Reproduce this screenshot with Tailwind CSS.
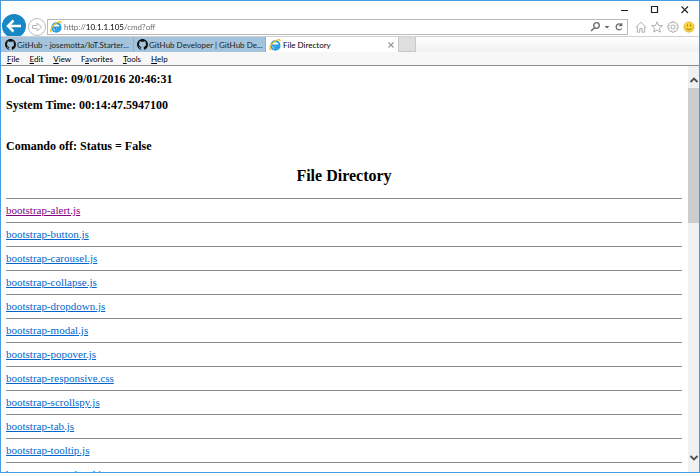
<!DOCTYPE html>
<html lang="en">
<head>
  <meta charset="UTF-8">
  <meta name="viewport" content="width=device-width, initial-scale=1.0">
  <title>File Directory</title>
  <script src="https://cdn.jsdelivr.net/npm/@tailwindcss/browser@4"></script>
</head>
<body class="bg-white">
  <svg class="hidden">
    <symbol id="ie" viewBox="0 0 24 24">
      <path d="M6 13h15c.3-5-3-8.500-8-8.500S4.500 8 4.500 13s3.500 8.500 8.500 8.500c3.500 0 6.500-2 7.700-5h-5c-2 2.500-5.700 1.200-5.700-2" fill="none" stroke="#2b9be0" stroke-width="3.600"/>
      <path d="M3 22C-1 19 4 10 11 5s12-5 11-1" fill="none" stroke="#f5bd1f" stroke-width="2.400" stroke-linecap="round"/>
    </symbol>
    <symbol id="github" viewBox="0 0 16 16">
      <path d="M8 0C3.580 0 0 3.580 0 8c0 3.540 2.290 6.530 5.470 7.590.4.070.55-.17.55-.38 0-.19-.01-.82-.01-1.490-2.010.37-2.530-.49-2.690-.94-.09-.23-.48-.94-.82-1.130-.28-.15-.68-.52-.01-.53.63-.01 1.080.58 1.230.82.72 1.210 1.870.87 2.330.66.07-.52.28-.87.51-1.070-1.780-.2-3.640-.89-3.640-3.950 0-.87.31-1.590.82-2.150-.08-.2-.36-1.020.08-2.120 0 0 .67-.21 2.200.82.64-.18 1.320-.27 2-.27s1.360.09 2 .27c1.530-1.040 2.200-.82 2.200-.82.44 1.100.16 1.920.08 2.120.51.56.82 1.270.82 2.150 0 3.070-1.870 3.750-3.650 3.950.29.25.54.73.54 1.480 0 1.070-.01 1.930-.01 2.200 0 .21.15.46.55.38A8.010 8.010 0 0 0 16 8c0-4.420-3.580-8-8-8z" fill="#111"/>
    </symbol>
  </svg>

  <div class="flex h-screen flex-col overflow-hidden border border-[#4a9bde] font-['Lato',sans-serif] text-[8px] text-[#222]">

    <!-- Title bar -->
    <div class="flex h-4 shrink-0 items-start justify-end gap-[18px] pt-[3px] pr-2">
      <button aria-label="Minimize" class="size-3"><svg viewBox="0 0 12 12"><path d="M2 6.500h7" stroke="#222"/></svg></button>
      <button aria-label="Maximize" class="size-3"><svg viewBox="0 0 12 12"><path d="M2.500 2.500h6v6h-6z" fill="none" stroke="#222" stroke-width="1.200"/></svg></button>
      <button aria-label="Close" class="size-3"><svg viewBox="0 0 12 12"><path d="M2.500 2.500l6.500 6.500M9 2.500l-6.500 6.500" stroke="#222" stroke-width="1.100"/></svg></button>
    </div>

    <!-- Navigation -->
    <div class="flex h-[19px] shrink-0 items-center pr-1">
      <button aria-label="Back" class="size-[26px] shrink-0"><svg viewBox="0 0 26 26"><circle cx="13" cy="12" r="12" fill="#1787c5"/><path d="M20 12H8M12.500 6.500L7 12l5.500 5.500" fill="none" stroke="#fff" stroke-width="2.500"/></svg></button>
      <button aria-label="Forward" class="size-5 shrink-0"><svg viewBox="0 0 20 20"><circle cx="10" cy="10" r="8.500" fill="#fff" stroke="#bbb"/><path d="M5.500 8.500h4.500V6l4.500 4-4.500 4v-2.500H5.500z" fill="none" stroke="#b5b5b5"/></svg></button>
      <div class="flex h-4 grow items-center border border-[#b9b9b9] bg-white px-0.5">
        <svg class="size-3 shrink-0"><use href="#ie"/></svg>
        <input type="text" aria-label="Address" value="http://10.1.1.105/cmd?off" class="ml-0.5 h-3 min-w-0 grow bg-[linear-gradient(90deg,#666_0_22px,#000_22px_60px,#666_60px)] bg-clip-text text-transparent outline-none">
        <button aria-label="Search" class="size-3"><svg viewBox="0 0 12 12"><circle cx="7.500" cy="4.500" r="2.800" fill="none" stroke="#666" stroke-width="1.300"/><path d="M5.500 6.700L2 10" stroke="#666" stroke-width="1.500"/></svg></button>
        <button aria-label="Show suggestions" class="ml-0.5 size-2"><svg viewBox="0 0 8 8"><path d="M1.500 3h5L4 5.500z" fill="#666"/></svg></button>
        <button aria-label="Refresh" class="ml-0.5 size-3"><svg viewBox="0 0 12 12"><path d="M8.500 4A3 3 0 1 0 8.700 7.500" fill="none" stroke="#666" stroke-width="1.300"/><path d="M9.300 1.500v3.800H5.500z" fill="#666"/></svg></button>
      </div>
      <div class="ml-[7px] flex gap-1">
        <button aria-label="Home" class="size-3"><svg viewBox="0 0 12 12"><path d="M.8 6.500L6 1.200l5.200 5.300M2.300 5.500v5.700h2.500V7.500h2.400v3.700h2.500V5.500" fill="none" stroke="#999" stroke-width=".8"/></svg></button>
        <button aria-label="Favorites" class="size-3"><svg viewBox="0 0 12 12"><path d="M6 .8l1.500 3.600 3.900.3-3 2.500.9 3.900L6 9l-3.300 2.100.9-3.900-3-2.500 3.900-.3z" fill="none" stroke="#999" stroke-width=".8"/></svg></button>
        <button aria-label="Tools" class="size-3"><svg viewBox="0 0 12 12" fill="none" stroke="#999" stroke-width=".8"><path d="M5 .8h2l.4 1.300 1.300-.7 1.700 1.700-.7 1.300 1.400.4v2.300l-1.400.4.7 1.300-1.600 1.700-1.400-.7-.4 1.400H5l-.4-1.400-1.400.7-1.600-1.700.7-1.300L.9 7.100V4.800l1.400-.4-.7-1.300 1.700-1.700 1.300.7z"/><circle cx="6" cy="6" r="2"/></svg></button>
        <button aria-label="Feedback" class="size-3"><svg viewBox="0 0 12 12"><circle cx="6" cy="6" r="5.200" fill="#fbd43a" stroke="#c9a53b" stroke-width=".5"/><path d="M4.300 3.500v1.800M7.700 3.500v1.800M3.300 7.200c1.200 2 4.200 2 5.400 0" fill="none" stroke="#775b10" stroke-width=".8"/></svg></button>
      </div>
    </div>

    <!-- Tabs -->
    <div class="flex h-4 shrink-0 border-t border-[#d0d0d0] bg-linear-to-b from-white to-[#f0f0f0]">
      <button class="flex w-[133px] items-center border-r border-[#8fb0c8] bg-[#a3c4dc] pl-1">
        <svg class="size-[11px] shrink-0"><use href="#github"/></svg>
        <span class="ml-px whitespace-nowrap">GitHub - josemotta/IoT.Starter...</span>
      </button>
      <button class="flex w-[132px] items-center border-r border-[#8fb0c8] bg-[#a3c4dc] pl-[3px]">
        <svg class="size-[11px] shrink-0"><use href="#github"/></svg>
        <span class="ml-px whitespace-nowrap">GitHub Developer | GitHub De...</span>
      </button>
      <div class="flex w-[132px] items-center bg-white px-[3px]">
        <svg class="size-3 shrink-0"><use href="#ie"/></svg>
        <button class="ml-0.5 grow text-left whitespace-nowrap text-black">File Directory</button>
        <button aria-label="Close tab" class="size-2"><svg viewBox="0 0 8 8"><path d="M1.500 1.500l5 5M6.500 1.500l-5 5" stroke="#999" stroke-width="1.200"/></svg></button>
      </div>
      <button aria-label="New tab" class="w-[18px] border border-t-0 border-[#c8c8c8] bg-[#dedede]"></button>
    </div>

    <!-- Menu bar -->
    <div class="flex h-[14px] shrink-0 items-center gap-2.5 border-b border-[#8c8c8c] bg-[#f7f7f7] pl-1.5 text-black">
      <button><u>F</u>ile</button>
      <button><u>E</u>dit</button>
      <button><u>V</u>iew</button>
      <button>F<u>a</u>vorites</button>
      <button><u>T</u>ools</button>
      <button><u>H</u>elp</button>
    </div>

    <div class="flex min-h-0 grow">
      <main class="min-w-0 grow overflow-hidden pl-[5px] pr-1.5 font-['Liberation_Serif',serif] text-[11px] text-black">
        <h3 class="mt-1.5 text-[12px] leading-[14px] font-bold">Local Time: 09/01/2016 20:46:31</h3>
        <h3 class="mt-3 text-[12px] leading-[14px] font-bold">System Time: 00:14:47.5947100</h3>
        <h3 class="mt-[27px] text-[12px] leading-[14px] font-bold">Comando off: Status = False</h3>
        <h2 class="mt-[13px] mb-3 text-center text-[16px] leading-5 font-bold">File Directory</h2>
        <div class="text-[#0066cc] [&_a]:flex [&_a]:h-[23px] [&_a]:w-fit [&_a]:items-center [&_a]:underline [&_hr]:border-[#888]">
          <hr><a href="#" class="text-[#800080]">bootstrap-alert.js</a>
          <hr><a href="#">bootstrap-button.js</a>
          <hr><a href="#">bootstrap-carousel.js</a>
          <hr><a href="#">bootstrap-collapse.js</a>
          <hr><a href="#">bootstrap-dropdown.js</a>
          <hr><a href="#">bootstrap-modal.js</a>
          <hr><a href="#">bootstrap-popover.js</a>
          <hr><a href="#">bootstrap-responsive.css</a>
          <hr><a href="#">bootstrap-scrollspy.js</a>
          <hr><a href="#">bootstrap-tab.js</a>
          <hr><a href="#">bootstrap-tooltip.js</a>
          <hr><a href="#">bootstrap-typeahead.js</a>
        </div>
      </main>
      <!-- Scrollbar -->
      <div class="flex w-[11px] shrink-0 flex-col bg-[#f0f0f0]">
        <button aria-label="Scroll up" class="flex h-[22px] items-center justify-center pt-1.5"><svg class="size-2.5" viewBox="0 0 10 10"><path d="M1.500 7L5 3.500 8.500 7" fill="none" stroke="#505050" stroke-width="1.900"/></svg></button>
        <div class="h-1/3 bg-[#cdcdcd]"></div>
        <div class="grow"></div>
        <button aria-label="Scroll down" class="flex h-[22px] items-center justify-center pb-1.5"><svg class="size-2.5" viewBox="0 0 10 10"><path d="M1.500 3L5 6.500 8.500 3" fill="none" stroke="#505050" stroke-width="1.900"/></svg></button>
      </div>
    </div>
  </div>
</body>
</html>
